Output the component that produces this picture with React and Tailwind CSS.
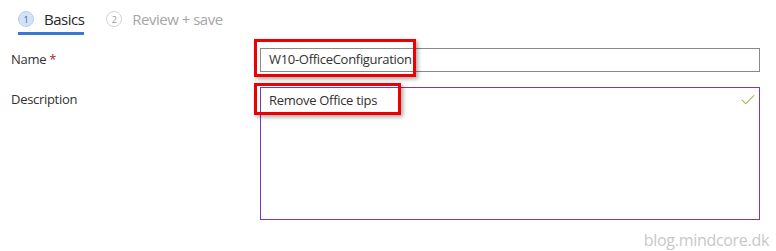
import { Check } from 'lucide-react'

const font = { fontFamily: '"Open Sans", "Noto Sans", Arial, sans-serif' }

function StepTab({ n, label, active }) {
  return (
    <div className={`flex h-[35px] items-center gap-[10px] pt-[6px] border-b-[3px] ${active ? 'border-[#3b78d6]' : 'border-transparent'}`}>
      <span
        className={`flex h-[16px] w-[16px] items-center justify-center rounded-full border text-[9px] leading-none ${
          active ? 'border-[#b9cdee] bg-[#d4e2f6] text-[#2f62b8]' : 'border-[#d4d4d4] bg-white text-[#9a9a9a]'
        }`}
      >
        {n}
      </span>
      <span className={`text-[15px] tracking-[-0.5px] ${active ? 'text-[#262626]' : 'text-[#a6a6a6]'}`}>{label}</span>
    </div>
  )
}

export default function App() {
  return (
    <div className="relative h-[251px] w-[776px] overflow-hidden bg-white" style={font}>
      <div className="flex gap-[22px] pl-[18px]">
        <StepTab n="1" label="Basics" active />
        <StepTab n="2" label="Review + save" />
      </div>

      <div className="pl-[11px] pt-[13px] tracking-[-0.3px]">
        <div className="flex items-center">
          <label className="w-[249px] text-[13px] text-[#323130]">
            Name <span className="text-[#a4262c]">*</span>
          </label>
          <div className="relative">
            <div className="flex h-[24px] w-[500px] items-center border border-[#8a8886] pl-[8px] text-[13px] text-[#323130]">
              W10-OfficeConfiguration
            </div>
            <div className="absolute left-[-6px] top-[-9px] h-[38px] w-[162px] border-[3px] border-[#ee0000] shadow-[2px_2px_4px_rgba(0,0,0,0.35)]" />
          </div>
        </div>

        <div className="mt-[15px] flex items-start">
          <label className="w-[249px] pt-[3px] text-[13px] text-[#323130]">Description</label>
          <div className="relative">
            <div className="h-[133px] w-[500px] border border-[#7e37b8] pl-[8px] pt-[3px] text-[13px] text-[#323130]">
              Remove Office tips
            </div>
            <Check className="absolute right-[3px] top-[4px] h-[18px] w-[18px] text-[#86b82a]" strokeWidth={1.4} />
            <div className="absolute left-[-6px] top-[-4px] h-[32px] w-[147px] border-[3px] border-[#ee0000] shadow-[2px_2px_4px_rgba(0,0,0,0.35)]" />
          </div>
        </div>
      </div>

      <div className="flex justify-end pr-[7px] pt-[12px] text-[16px] leading-none tracking-[-0.3px] text-[#c8c8c8]">blog.mindcore.dk</div>
    </div>
  )
}
